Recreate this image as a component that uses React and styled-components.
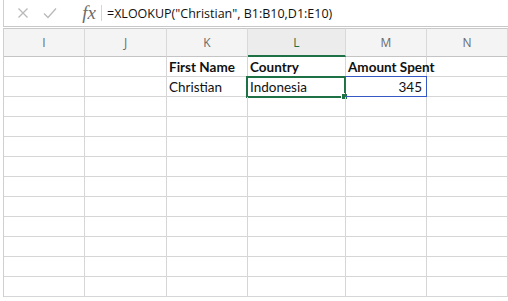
import React from 'react';
import styled, { createGlobalStyle } from 'styled-components';

const GlobalStyle = createGlobalStyle`
  html, body {
    margin: 0;
    padding: 0;
    background: #ffffff;
  }
  body {
    font-family: Lato, "Open Sans", sans-serif;
    overflow: hidden;
  }
`;

const GREEN = '#1e7145';

const columns = [
  { id: 'I', width: 81 },
  { id: 'J', width: 82 },
  { id: 'K', width: 81 },
  { id: 'L', width: 98 },
  { id: 'M', width: 81 },
  { id: 'N', width: 81 },
];

const rows = [
  { K: { text: 'First Name', bold: true }, L: { text: 'Country', bold: true }, M: { text: 'Amount Spent', bold: true } },
  { K: { text: 'Christian' }, L: { text: 'Indonesia', selected: true }, M: { text: '345', right: true, ref: true } },
  {}, {}, {}, {}, {}, {}, {}, {}, {}, {},
];

const Sheet = styled.div`
  width: 508px;
  height: 301px;
  overflow: hidden;
`;

const FormulaBar = styled.div`
  display: flex;
  align-items: center;
  height: 26px;
  margin-left: 3px;
  border-left: 1px solid #cfcfcf;
  border-bottom: 1px solid #c8c8c8;
`;

const IconSlot = styled.div`
  display: flex;
  align-items: center;
  justify-content: center;
  width: ${p => p.$w}px;
  height: 26px;
  color: #b9b9b9;
`;

const Fx = styled.span`
  font-family: "Liberation Serif", serif;
  font-style: italic;
  font-size: 19px;
  line-height: 1;
  color: #6b6b6b;
  width: 20px;
  text-align: center;
  margin-left: 21px;
  margin-top: -2px;
`;

const Divider = styled.div`
  width: 1px;
  height: 16px;
  background: #d6d6d6;
  margin: 0 5px 0 2px;
`;

const Formula = styled.div`
  font-family: "Open Sans", sans-serif;
  font-size: 12.5px;
  color: #111;
  white-space: nowrap;
`;

const Grid = styled.div`
  display: grid;
  grid-template-columns: ${columns.map(c => `${c.width}px`).join(' ')};
  grid-template-rows: 29px;
  grid-auto-rows: 20px;
  margin-top: 1px;
  margin-left: 3px;
  border-left: 1px solid #d0d0d0;
`;

const HeaderCell = styled.div`
  height: 29px;
  box-sizing: border-box;
  display: flex;
  align-items: center;
  justify-content: center;
  background: ${p => (p.$active ? '#ececec' : '#f4f4f4')};
  border-top: 1px solid #c8c8c8;
  border-right: 1px solid #d9d9d9;
  border-bottom: ${p => (p.$active ? `2px solid ${GREEN}` : '1px solid #c4c4c4')};
  padding-top: ${p => (p.$active ? '1px' : '0')};
  font-family: "Open Sans", sans-serif;
  font-size: 12px;
  color: ${p => (p.$active ? GREEN : '#6a6a6a')};
`;

const Cell = styled.div`
  position: relative;
  box-sizing: border-box;
  height: 20px;
  border-right: 1px solid #d6d6d6;
  border-bottom: 1px solid #d6d6d6;
  display: flex;
  align-items: center;
  justify-content: ${p => (p.$right ? 'flex-end' : 'flex-start')};
  padding: 0 ${p => (p.$right ? '4px' : '2px')} 0 2px;
  font-size: 13.5px;
  font-weight: ${p => (p.$bold ? 700 : 400)};
  color: #111;
  white-space: nowrap;
`;

const Selection = styled.div`
  position: absolute;
  left: -2px;
  top: -1px;
  right: -1px;
  bottom: -2px;
  border: 2px solid ${GREEN};
  pointer-events: none;
`;

const Handle = styled.div`
  position: absolute;
  right: -4px;
  bottom: -4px;
  width: 5px;
  height: 5px;
  background: ${GREEN};
  border: 1px solid #fff;
`;

const RefBox = styled.div`
  position: absolute;
  left: -1px;
  top: -1px;
  right: -1px;
  bottom: -1px;
  border: 1px solid #3658c4;
  pointer-events: none;
`;

const CancelIcon = () => (
  <svg width="12" height="12" viewBox="0 0 12 12">
    <path d="M1.5 1.5 L10.5 10.5 M10.5 1.5 L1.5 10.5" stroke="currentColor" strokeWidth="1.3" fill="none" />
  </svg>
);

const CheckIcon = () => (
  <svg width="14" height="12" viewBox="0 0 14 12">
    <path d="M1 6.5 L5 10.5 L13 1.5" stroke="currentColor" strokeWidth="1.3" fill="none" />
  </svg>
);

export default function App() {
  return (
    <Sheet>
      <GlobalStyle />
      <FormulaBar>
        <IconSlot $w={38}><CancelIcon /></IconSlot>
        <IconSlot $w={16}><CheckIcon /></IconSlot>
        <Fx>fx</Fx>
        <Divider />
        <Formula>=XLOOKUP("Christian", B1:B10,D1:E10)</Formula>
      </FormulaBar>
      <Grid>
        {columns.map(c => (
          <HeaderCell key={c.id} $active={c.id === 'L'}>{c.id}</HeaderCell>
        ))}
        {rows.map((row, r) =>
          columns.map(c => {
            const cell = row[c.id];
            return (
              <Cell key={`${c.id}${r}`} $bold={cell?.bold} $right={cell?.right}>
                {cell?.text}
                {cell?.selected && (
                  <Selection>
                    <Handle />
                  </Selection>
                )}
                {cell?.ref && <RefBox />}
              </Cell>
            );
          })
        )}
      </Grid>
    </Sheet>
  );
}
